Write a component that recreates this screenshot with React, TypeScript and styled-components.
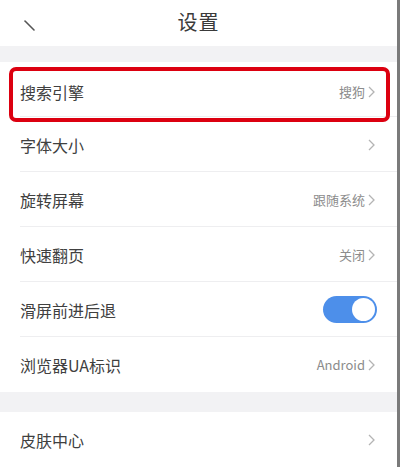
import React from 'react';
import styled, { createGlobalStyle } from 'styled-components';

const GlobalStyle = createGlobalStyle`
    html, body {
        margin: 0;
        padding: 0;
        background: #ffffff;
    }
    body {
        font-family: "Noto Sans CJK SC", "Noto Sans", "Liberation Sans", sans-serif;
        color: #333333;
    }
`;

const StyledPage = styled.div`
    width: 400px;
    height: 467px;
    box-sizing: border-box;
    border-right: 3px solid #7a7a7a;
    background: #ffffff;
    overflow: hidden;
    display: flex;
    flex-direction: column;
`;

const StyledHeader = styled.div`
    height: 46px;
    flex: none;
    display: flex;
    align-items: center;
    justify-content: center;
    position: relative;
`;

const StyledBack = styled.svg`
    position: absolute;
    left: 22px;
    top: 19px;
`;

const StyledTitle = styled.div`
    font-size: 20px;
    color: #3a3a3a;
    letter-spacing: 1px;
    margin-top: -4px;
`;

const StyledGap = styled.div<{ $height: number }>`
    height: ${({ $height }) => $height}px;
    flex: none;
    background: #f2f2f4;
`;

const StyledRow = styled.div<{ $highlight?: boolean; $divider?: boolean }>`
    height: 55px;
    flex: none;
    display: flex;
    align-items: center;
    box-sizing: border-box;
    padding: ${({ $highlight }) => ($highlight ? '4px 22px 0 20px' : '0 22px 0 20px')};
    position: relative;

    ${({ $divider }) =>
        $divider &&
        `
        &::before {
            content: '';
            position: absolute;
            left: 20px;
            right: 0;
            bottom: 0;
            height: 1px;
            background: #eeeef0;
        }
    `}

    ${({ $highlight }) =>
        $highlight &&
        `
        &::after {
            content: '';
            position: absolute;
            left: 9px;
            right: 7px;
            top: 5px;
            bottom: -5px;
            border: 4px solid #dc0010;
            border-radius: 7px;
            z-index: 1;
        }
    `}
`;

const StyledLabel = styled.span`
    flex: 1;
    font-size: 16px;
    color: #404040;
`;

const StyledValue = styled.span`
    font-size: 13px;
    color: #8c8c8c;
    margin-right: 3px;
`;

const StyledChevron = styled.svg`
    flex: none;
`;

const StyledToggle = styled.div`
    width: 54px;
    height: 27px;
    border-radius: 14px;
    background: #4d8fea;
    display: flex;
    align-items: center;
    justify-content: flex-end;
    padding: 0 2px;
    box-sizing: border-box;
    margin-right: -2px;
`;

const StyledKnob = styled.div`
    width: 23px;
    height: 23px;
    border-radius: 50%;
    background: #ffffff;
`;

const Chevron = () => (
    <StyledChevron width="7" height="12" viewBox="0 0 7 12">
        <path d="M1 1 L6 6 L1 11" fill="none" stroke="#b4b4b4" strokeWidth="1.3" />
    </StyledChevron>
);

type RowProps = {
    label: string;
    value?: string;
    toggle?: boolean;
    highlight?: boolean;
    divider?: boolean;
};

const SettingRow = ({ label, value, toggle, highlight, divider }: RowProps) => (
    <StyledRow $highlight={highlight} $divider={divider}>
        <StyledLabel>{label}</StyledLabel>
        {toggle ? (
            <StyledToggle>
                <StyledKnob />
            </StyledToggle>
        ) : (
            <>
                {value && <StyledValue>{value}</StyledValue>}
                <Chevron />
            </>
        )}
    </StyledRow>
);

export default function App() {
    return (
        <>
            <GlobalStyle />
            <StyledPage>
                <StyledHeader>
                    <StyledBack width="14" height="14" viewBox="0 0 14 14">
                        <path d="M3 2 L12 11" stroke="#555" strokeWidth="1.6" strokeLinecap="round" />
                    </StyledBack>
                    <StyledTitle>设置</StyledTitle>
                </StyledHeader>
                <StyledGap $height={16} />
                <SettingRow label="搜索引擎" value="搜狗" highlight divider />
                <SettingRow label="字体大小" divider />
                <SettingRow label="旋转屏幕" value="跟随系统" divider />
                <SettingRow label="快速翻页" value="关闭" divider />
                <SettingRow label="滑屏前进后退" toggle divider />
                <SettingRow label="浏览器UA标识" value="Android" />
                <StyledGap $height={20} />
                <SettingRow label="皮肤中心" />
            </StyledPage>
        </>
    );
}
